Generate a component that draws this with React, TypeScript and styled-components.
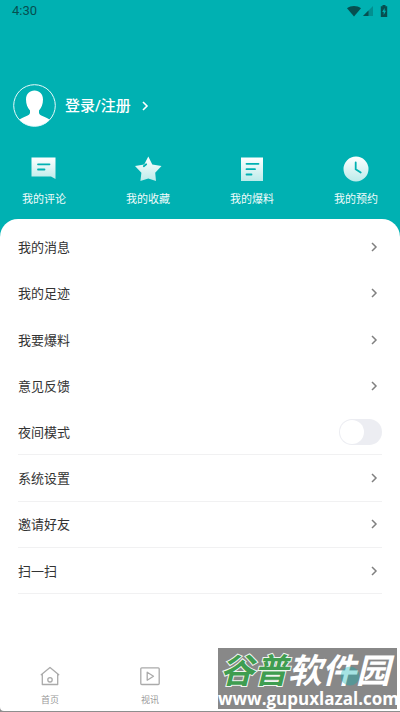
import React, { useState } from "react";
import styled, { createGlobalStyle, css } from "styled-components";

const TEAL = "#00b1b2";

const GlobalStyle = createGlobalStyle`
  * { box-sizing: border-box; }
  body {
    margin: 0;
    background: #8e8e8e;
    font-family: Roboto, "Noto Sans CJK SC", sans-serif;
  }
  button {
    margin: 0;
    padding: 0;
    border: 0;
    background: none;
    font: inherit;
    color: inherit;
    cursor: pointer;
  }
  svg { display: block; }
`;

const Page = styled.div`
  position: relative;
  display: flex;
  flex-direction: column;
  min-height: 100vh;
  padding-bottom: 1px;
  background: linear-gradient(${TEAL} 50%, #8e8e8e 50%);
  overflow: hidden;
`;

const StatusBar = styled.div`
  display: flex;
  align-items: center;
  height: 22px;
  padding: 0 12px;
  color: #064f50;
  font-size: 13px;
  line-height: 22px;
`;

const StatusIcons = styled.div`
  display: flex;
  align-items: center;
  gap: 2px;
  margin-left: auto;
  svg:last-child { margin-left: 5px; }
`;

const Profile = styled.button`
  display: flex;
  align-items: center;
  align-self: flex-start;
  margin: 62px 0 0 13px;
  color: #fff;
  font-size: 15px;
  font-weight: 500;
  line-height: 24px;
`;

const ProfileName = styled.span`
  margin: 0 10px 0 9px;
`;

const Shortcuts = styled.nav`
  display: flex;
  justify-content: space-between;
  margin-top: 28px;
  padding: 0 22px 10px;
`;

const Shortcut = styled.button`
  display: flex;
  flex-direction: column;
  align-items: center;
  gap: 8px;
  color: #f2fcfc;
  font-size: 11px;
  line-height: 18px;
`;

const Sheet = styled.main`
  display: flex;
  flex: 1;
  flex-direction: column;
  padding-top: 5px;
  border-radius: 18px 18px 0 4px;
  background: #fff;
`;

const Menu = styled.div`
  display: grid;
  grid-auto-rows: 1fr;
  min-height: 52vh;
  padding: 0 18px;
`;

const rowStyle = css<{ $divided?: boolean }>`
  display: flex;
  align-items: center;
  justify-content: space-between;
  border-bottom: ${(p) => (p.$divided ? "1px solid #f1f1f2" : "0")};
  color: #333;
  font-size: 13px;
  line-height: 20px;
  cursor: pointer;
`;

const MenuButton = styled.button<{ $divided?: boolean }>`
  && {
    ${rowStyle}
    padding-right: 4px;
  }
`;

const MenuToggle = styled.label<{ $divided?: boolean }>`
  ${rowStyle}
`;

const MenuText = styled.span`
  padding-top: 2px;
`;

const Switch = styled.input`
  appearance: none;
  display: flex;
  align-items: center;
  width: 43px;
  height: 26px;
  margin: 0;
  padding: 1px;
  border-radius: 13px;
  background: #ecedf2;
  cursor: pointer;
  &::before {
    content: "";
    width: 24px;
    height: 24px;
    border-radius: 50%;
    background: #fff;
  }
  &:checked {
    justify-content: flex-end;
    background: ${TEAL};
  }
`;

const TabBar = styled.nav`
  display: grid;
  grid-template-columns: repeat(4, 1fr);
  margin-top: auto;
  padding-bottom: 4px;
`;

const Tab = styled.button<{ $active?: boolean }>`
  && {
    display: flex;
    flex-direction: column;
    align-items: center;
    gap: 7px;
    color: #999;
    font-size: 9px;
    line-height: 14px;
  }
  position: relative;
  z-index: ${(p) => (p.$active ? 2 : 0)};
  opacity: ${(p) => (p.$active ? 0.35 : 1)};
`;

const Watermark = styled.div`
  position: absolute;
  right: 3px;
  bottom: 3px;
  z-index: 1;
  width: 179px;
  height: 61px;
  padding: 1px 0 0;
  background: #888;
  color: #fff;
  white-space: nowrap;
  pointer-events: none;
`;

const WatermarkTitle = styled.div`
  padding-left: 2px;
  font: italic 700 34px/40px "Noto Sans CJK SC", sans-serif;
`;

const WatermarkAccent = styled.span`
  color: #3f9d50;
  -webkit-text-stroke: 2px #f0f5f0;
  paint-order: stroke fill;
`;

const WatermarkUrl = styled.div`
  font: 700 17px/20px "Open Sans", sans-serif;
`;

const Chevron = ({ color, bold }: { color: string; bold?: boolean }) => (
  <svg width="8" height="10" viewBox="0 0 8 10" fill="none" stroke={color} strokeWidth={bold ? 1.6 : 1.5}>
    <path d="M2 1l4 4-4 4" />
  </svg>
);

const Avatar = () => (
  <svg width="43" height="43" viewBox="0 0 43 43">
    <defs>
      <clipPath id="avatar-clip">
        <circle cx="21.5" cy="21.5" r="20.8" />
      </clipPath>
    </defs>
    <g clipPath="url(#avatar-clip)" fill="#fff">
      <path d="M21.500 6.500C26.500 6.500 30 10 30 15.500C30 20 28.500 24 26 26.500V28.500C26 30.500 27.500 31.300 30 32.300C34 33.800 37 35.500 39 38V44H4V38C6 35.500 9 33.800 13 32.300C15.500 31.300 17 30.500 17 28.500V26.500C14.500 24 13 20 13 15.500C13 10 16.500 6.500 21.500 6.500Z" />
    </g>
    <circle cx="21.5" cy="21.5" r="20.8" fill="none" stroke="#e8fafa" strokeWidth="1" />
  </svg>
);

type ShortcutName = "comment" | "star" | "article" | "clock";

const shortcutShapes: Record<ShortcutName, { body: string; marks: string }> = {
  comment: {
    body: "M1.500 2.500h24v21.500l-4.500-2.500H1.500z",
    marks: "M8 9.300h11.500M8 14.500h6.500",
  },
  star: {
    body: "M14.300 1.500l4 8 9.200 1.600-6.300 6.600.8 8.300-7.700-2.500-7.900 2.500 1-8.300-6.400-6.600 9.200-1.600z",
    marks: "M9.800 11.200l2.400-1.900",
  },
  article: {
    body: "M3 2.500h22v23.500H3z",
    marks: "M8.500 8.800h12M8.500 14.200h8.500M8.500 19.500h5",
  },
  clock: {
    body: "M14 1.500a12.500 12.500 0 1 1 0 25 12.500 12.500 0 0 1 0-25z",
    marks: "M13.700 7.500v6.700l5 3.300",
  },
};

const ShortcutIcon = ({ name }: { name: ShortcutName }) => (
  <svg width="28" height="28" viewBox="0 0 28 28">
    <defs>
      <linearGradient id={`fill-${name}`} x1="0" y1="0" x2="0" y2="1">
        <stop offset="0" stopColor="#fff" />
        <stop offset="1" stopColor="#bcebea" />
      </linearGradient>
    </defs>
    <path d={shortcutShapes[name].body} fill={`url(#fill-${name})`} />
    <path d={shortcutShapes[name].marks} fill="none" stroke={TEAL} strokeWidth="1.8" strokeLinecap="round" />
  </svg>
);

const HomeIcon = () => (
  <svg width="20" height="20" viewBox="0 0 20 20" fill="none" stroke="#aaa" strokeWidth="1.3" strokeLinejoin="round" strokeLinecap="round">
    <path d="M1.200 8.700L10 1.500l8.800 7.200M2.300 8v10.500h15.400V8" />
    <circle cx="10" cy="13.800" r="2.200" />
  </svg>
);

const VideoIcon = () => (
  <svg width="20" height="20" viewBox="0 0 20 20" fill="none" stroke="#aaa" strokeWidth="1.3" strokeLinejoin="round">
    <rect x=".8" y="1.800" width="18.400" height="16.700" rx="1" />
    <path d="M7.200 6.200l6.300 4-6.300 4z" />
  </svg>
);

const MeIcon = () => (
  <svg width="20" height="41" viewBox="0 0 20 41">
    <circle cx="10" cy="10" r="9.500" fill={TEAL} />
  </svg>
);

const shortcuts: { label: string; icon: ShortcutName }[] = [
  { label: "我的评论", icon: "comment" },
  { label: "我的收藏", icon: "star" },
  { label: "我的爆料", icon: "article" },
  { label: "我的预约", icon: "clock" },
];

const links = ["我的消息", "我的足迹", "我要爆料", "意见反馈"];
const settings = ["系统设置", "邀请好友", "扫一扫"];

export default function App() {
  const [night, setNight] = useState(false);

  return (
    <>
      <GlobalStyle />
      <Page>
        <StatusBar>
          <span>4:30</span>
          <StatusIcons>
            <svg width="14" height="12" viewBox="0 0 14 12" fill="#064f50">
              <path d="M0 3.200C4 .2 10 .2 14 3.200L7 11.500z" />
            </svg>
            <svg width="10" height="10" viewBox="0 0 10 10" fill="#064f50">
              <path d="M10 0v10H0z" opacity=".35" />
              <path d="M5.500 4.500V10H0z" />
            </svg>
            <svg width="8" height="12" viewBox="0 0 8 12">
              <path d="M2.500 0h3v1.200h1.700v10.800H.8V1.200h1.700z" fill="#064f50" />
              <path d="M4.600 3L2.200 7h1.500v3l2.300-4.200H4.600z" fill={TEAL} />
            </svg>
          </StatusIcons>
        </StatusBar>

        <Profile type="button">
          <Avatar />
          <ProfileName>登录/注册</ProfileName>
          <Chevron color="#fff" bold />
        </Profile>

        <Shortcuts>
          {shortcuts.map((s) => (
            <Shortcut key={s.label} type="button">
              <ShortcutIcon name={s.icon} />
              {s.label}
            </Shortcut>
          ))}
        </Shortcuts>

        <Sheet>
          <Menu>
            {links.map((label) => (
              <MenuButton key={label} type="button">
                <MenuText>{label}</MenuText>
                <Chevron color="#808080" />
              </MenuButton>
            ))}
            <MenuToggle $divided>
              <MenuText>夜间模式</MenuText>
              <Switch type="checkbox" role="switch" checked={night} onChange={(e) => setNight(e.target.checked)} />
            </MenuToggle>
            {settings.map((label) => (
              <MenuButton key={label} type="button" $divided>
                <MenuText>{label}</MenuText>
                <Chevron color="#808080" />
              </MenuButton>
            ))}
          </Menu>

          <TabBar>
            <Tab type="button">
              <HomeIcon />
              首页
            </Tab>
            <Tab type="button">
              <VideoIcon />
              视讯
            </Tab>
            <span />
            <Tab type="button" $active aria-label="我的">
              <MeIcon />
            </Tab>
          </TabBar>
        </Sheet>

        <Watermark>
          <WatermarkTitle>
            <WatermarkAccent>谷普</WatermarkAccent>软件园
          </WatermarkTitle>
          <WatermarkUrl>www.gupuxlazal.com</WatermarkUrl>
        </Watermark>
      </Page>
    </>
  );
}
